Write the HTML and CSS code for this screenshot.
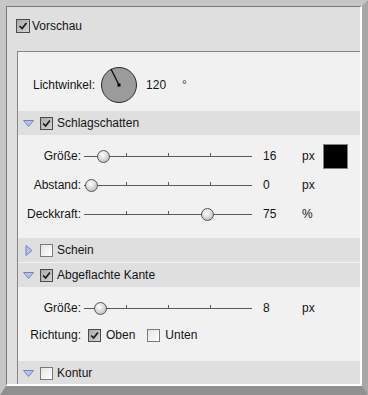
FILE: index.html
```html
<!DOCTYPE html>
<html lang="de">
<head>
  <meta charset="UTF-8">
  <title>Ebenenstil</title>
  <link rel="stylesheet" href="styles.css">
</head>
<body>
  <div class="window">
    <div class="inner">
      <div class="preview">
        <span class="cb on big"><svg viewBox="0 0 14 14"><path d="M3 7 L6 10 L11 3.5" /></svg></span>
        <span>Vorschau</span>
      </div>
      <div class="panel">
        <div class="angle-row">
          <span>Lichtwinkel:</span>
          <svg class="dial" width="38" height="38" viewBox="0 0 38 38">
            <circle cx="19" cy="19" r="17.5" fill="#9b9b9b" stroke="#2a2a2a" stroke-width="1"/>
            <line x1="19" y1="19" x2="11" y2="3" stroke="#111" stroke-width="1.4"/>
            <rect x="17.5" y="17.5" width="3" height="3" fill="#000"/>
          </svg>
          <span class="num">120</span>
          <span class="deg">°</span>
        </div>

        <div class="sec-head">
          <svg class="tri" viewBox="0 0 11 11"><polygon points="0.5,2.5 10.5,2.5 5.5,8.5"/></svg>
          <span class="cb on"><svg viewBox="0 0 13 13"><path d="M2.5 6.5 L5.5 9.5 L10.5 3" /></svg></span>
          <span>Schlagschatten</span>
        </div>
        <div class="sec-body shadow">
          <div class="row">
            <span class="lbl">Größe:</span>
            <div class="slider"><i class="tick t1"></i><i class="tick t2"></i><i class="tick t3"></i><b class="thumb" style="left: 13px"></b></div>
            <span class="val">16</span>
            <span class="unit">px</span>
            <span class="swatch"></span>
          </div>
          <div class="row">
            <span class="lbl">Abstand:</span>
            <div class="slider"><i class="tick t1"></i><i class="tick t2"></i><i class="tick t3"></i><b class="thumb" style="left: 1px"></b></div>
            <span class="val">0</span>
            <span class="unit">px</span>
          </div>
          <div class="row">
            <span class="lbl">Deckkraft:</span>
            <div class="slider"><i class="tick t1"></i><i class="tick t2"></i><i class="tick t3"></i><b class="thumb" style="left: 117px"></b></div>
            <span class="val">75</span>
            <span class="unit">%</span>
          </div>
        </div>

        <div class="sec-head">
          <svg class="tri" viewBox="0 0 11 11"><polygon points="3,0.5 9,5.5 3,10.5"/></svg>
          <span class="cb"></span>
          <span>Schein</span>
        </div>

        <div class="sec-head">
          <svg class="tri" viewBox="0 0 11 11"><polygon points="0.5,2.5 10.5,2.5 5.5,8.5"/></svg>
          <span class="cb on"><svg viewBox="0 0 13 13"><path d="M2.5 6.5 L5.5 9.5 L10.5 3" /></svg></span>
          <span>Abgeflachte Kante</span>
        </div>
        <div class="sec-body bevel">
          <div class="row">
            <span class="lbl">Größe:</span>
            <div class="slider"><i class="tick t1"></i><i class="tick t2"></i><i class="tick t3"></i><b class="thumb" style="left: 10px"></b></div>
            <span class="val">8</span>
            <span class="unit">px</span>
          </div>
          <div class="row dir">
            <span class="lbl">Richtung:</span>
            <div class="choices">
              <span class="cb on"><svg viewBox="0 0 13 13"><path d="M2.5 6.5 L5.5 9.5 L10.5 3" /></svg></span>
              <span class="opt">Oben</span>
              <span class="cb"></span>
              <span class="opt">Unten</span>
            </div>
          </div>
        </div>

        <div class="sec-head">
          <svg class="tri" viewBox="0 0 11 11"><polygon points="0.5,2.5 10.5,2.5 5.5,8.5"/></svg>
          <span class="cb"></span>
          <span>Kontur</span>
        </div>
      </div>
    </div>
  </div>
</body>
</html>
```

FILE: styles.css
```css
* { box-sizing: border-box; }
body {
  margin: 0;
  font-family: "Liberation Sans", Arial, sans-serif;
  font-size: 12px;
  color: #141414;
}
.window {
  width: 368px;
  height: 395px;
  border-style: solid;
  border-width: 6px 6px 9px 6px;
  border-color: #c6c6c6 #a7a7a7 #909090 #c6c6c6;
}
.inner {
  height: 100%;
  border-style: solid;
  border-width: 1px 2px 2px 1px;
  border-color: #7b7b7b #ffffff #ffffff #7b7b7b;
  background: #dfdfdf;
  overflow: hidden;
}
.preview {
  height: 44px;
  padding: 12px 0 0 9px;
  display: flex;
  align-items: center;
  align-self: flex-start;
  gap: 2px;
  line-height: 14px;
}
.preview { align-items: flex-start; }
.panel {
  margin-left: 10px;
  border-left: 1px solid #858585;
  border-top: 1px solid #858585;
  background: #f1f1f1;
}

/* checkboxes */
.cb {
  display: inline-block;
  width: 13px;
  height: 13px;
  border: 1px solid #7a7a7a;
  background: linear-gradient(135deg, #e4e4e4, #ffffff);
  flex: none;
}
.cb.big { width: 14px; height: 14px; }
.cb.on {
  border-color: #4a4a4a;
  background: linear-gradient(135deg, #a9a9a9, #d4d4d4);
}
.cb svg {
  display: block;
  width: 100%;
  height: 100%;
}
.cb path {
  fill: none;
  stroke: #1b1b1b;
  stroke-width: 2;
}

/* Lichtwinkel */
.angle-row {
  height: 58px;
  padding: 14px 0 0 15px;
  display: flex;
  align-items: center;
  align-self: flex-start;
}
.angle-row { align-items: flex-start; }
.angle-row > span { line-height: 38px; }
.dial {
  display: block;
  margin-left: 5px;
}
.angle-row .num { margin-left: 8px; }
.angle-row .deg { margin-left: 16px; color: #333; }

/* section headers */
.sec-head {
  height: 25px;
  border-top: 1px solid #f1f1f1;
  background: #dfdfdf;
  padding-left: 5px;
  display: flex;
  align-items: center;
}
.tri {
  width: 11px;
  height: 11px;
  flex: none;
}
.tri polygon {
  fill: #b9c0ea;
  stroke: #7581c6;
  stroke-width: 1;
}
.sec-head .cb { margin-left: 6px; }
.sec-head .cb + span { margin-left: 4px; }

/* section bodies */
.sec-body.shadow {
  height: 102px;
  padding-top: 6px;
}
.sec-body.bevel {
  height: 73px;
  padding-top: 6px;
}
.row {
  display: grid;
  grid-template-columns: 66px 168px 50px 21px 25px;
  align-items: center;
  height: 29px;
}
.row.dir {
  grid-template-columns: 66px auto;
  height: 26px;
}
.lbl {
  text-align: right;
  padding-right: 3px;
}
.val { padding-left: 11px; }
.swatch {
  width: 25px;
  height: 25px;
  background: #000;
  border: 1px solid #808080;
  margin-top: 2px;
}
.slider {
  position: relative;
  height: 13px;
  background: linear-gradient(#5a5a5a, #5a5a5a) 0 7px / 100% 1px no-repeat;
}
.tick {
  position: absolute;
  top: 4px;
  width: 1px;
  height: 3px;
  background: #5a5a5a;
}
.t1 { left: 42px; }
.t2 { left: 84px; }
.t3 { left: 126px; }
.thumb {
  position: absolute;
  top: 1px;
  width: 13px;
  height: 13px;
  border-radius: 50%;
  border: 1px solid #575757;
  background: radial-gradient(circle at 40% 35%, #ffffff, #d0d0d0 60%, #a8a8a8);
}
.choices {
  display: flex;
  align-items: center;
  padding-left: 4px;
}
.choices .opt { margin-left: 5px; }
.choices .opt + .cb { margin-left: 12px; }
```
